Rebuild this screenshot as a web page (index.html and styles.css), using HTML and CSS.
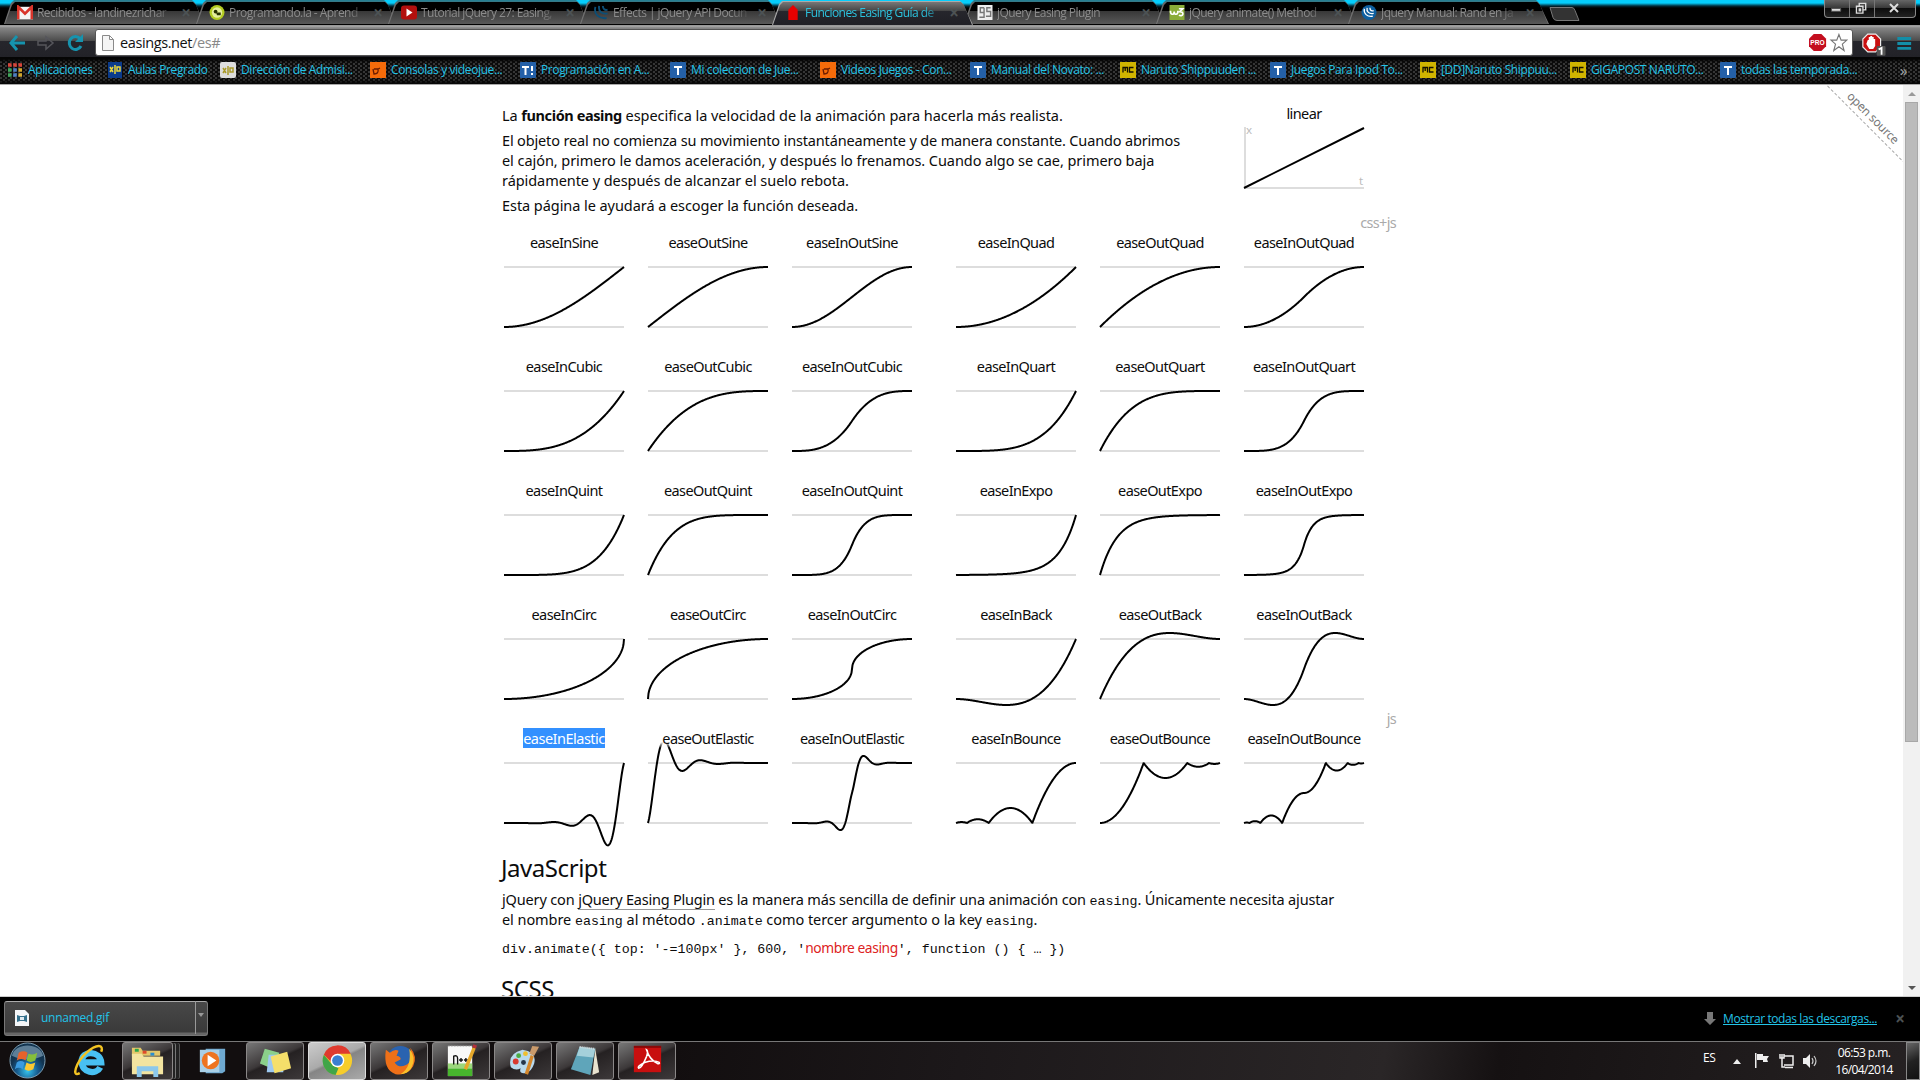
FILE: index.html
```html
<!DOCTYPE html>
<html lang="es">
<head>
<meta charset="utf-8">
<title>Funciones Easing Guía de</title>
<link rel="stylesheet" href="styles.css">
</head>
<body>
<header class="tabstrip">
  <div class="tab"><svg class="fav" viewBox="0 0 14 12"><path fill="#f4f4f4" d="M0 1h14v11H0z"/><path fill="none" stroke="#d9352b" stroke-width="2.4" d="M1 12V1l6 6 6-6v11"/></svg><span class="tab-text">Recibidos - landinezrichar</span><i class="x">×</i></div>
  <div class="tab"><svg class="fav" viewBox="0 0 16 16"><circle cx="8" cy="8" r="8" fill="#b4cc22"/><circle cx="8" cy="8" r="5.5" fill="#e5ef9c"/><circle cx="6.500" cy="7" r="2" fill="#263000"/><path fill="#263000" d="M7 8h5v3H8z"/></svg><span class="tab-text">Programando.la - Aprend</span><i class="x">×</i></div>
  <div class="tab"><svg class="fav" viewBox="0 0 16 14"><rect width="16" height="14" rx="3" fill="#b3100e"/><path fill="#fff" d="M5.500 3v8l6-4z"/></svg><span class="tab-text">Tutorial jQuery 27: Easing,</span><i class="x">×</i></div>
  <div class="tab"><svg class="fav" viewBox="0 0 16 16"><path fill="none" stroke="#0b4f78" stroke-width="2" d="M2 2c-2 8 4 13 12 12M6 1c-1 6 3 9 9 8M10 1c0 3 2 5 5 4"/></svg><span class="tab-text">Effects | jQuery API Docun</span><i class="x">×</i></div>
  <div class="tab active"><svg class="fav" viewBox="0 0 14 16"><path fill="#e80000" d="M2 16V5l5-5 5 5v11z"/></svg><span class="tab-text">Funciones Easing Guía de</span><i class="x">×</i></div>
  <div class="tab"><svg class="fav" viewBox="0 0 16 16"><path fill="#eee" d="M0 0h16v16H0z"/><path fill="none" stroke="#777" stroke-width="1.500" d="M7 3H3v5h4V3v10H2M14 3h-4v4h4v5H9"/></svg><span class="tab-text">jQuery Easing Plugin</span><i class="x">×</i></div>
  <div class="tab"><svg class="fav" viewBox="0 0 16 16"><path fill="#8aac38" d="M0 0h16v16H0z"/><path fill="none" stroke="#fff" stroke-width="1.800" d="M1 6c0 5 4 5 4 1 0 4 4 4 4-1M10 4h4l-3 3c5 0 4 6-1 4"/></svg><span class="tab-text">jQuery animate() Method</span><i class="x">×</i></div>
  <div class="tab"><svg class="fav" viewBox="0 0 16 16"><circle cx="8" cy="8" r="8" fill="#0d5fa0"/><path fill="none" stroke="#fff" stroke-width="1.400" d="M3 4c-1 5 3 9 9 8M6 3c-1 4 2 7 7 6M9 3c0 2 1 4 4 3"/></svg><span class="tab-text">Jquery Manual: Rand en Ja</span><i class="x">×</i></div>
  <svg class="newtab" viewBox="0 0 32 14"><path fill="#333" stroke="#777" d="M1 .500h22q2 0 3 3l4 10H8q-3 0-4-3z"/></svg>
  <div class="winctl">
    <svg viewBox="0 0 26 17"><path fill="#ddd" stroke="#555" d="M7 8.500h10v3H7z"/></svg>
    <svg viewBox="0 0 26 17"><path fill="none" stroke="#ddd" stroke-width="1.500" d="M7 6h7v7.500H7zM10 6V3h7v7h-3M10 9h1.500v2H10z"/></svg>
    <svg viewBox="0 0 40 17"><path fill="none" stroke="#ddd" stroke-width="2" d="M15 4l8 8M23 4l-8 8"/></svg>
  </div>
</header>
<nav class="toolbar">
  <svg class="nav" viewBox="0 0 95 32">
    <path fill="none" stroke="#1693ae" stroke-width="3" d="M25 18H11M17 11l-6 7 6 7"/>
    <path fill="none" stroke="#55555b" stroke-width="1.500" d="M38 16h8v-4l7 6-7 6v-4h-8z"/>
    <path fill="none" stroke="#1693ae" stroke-width="3" d="M80 13.500A6.200 6.500 0 1 0 81 21"/><path fill="#1693ae" d="M83 9v8h-8z"/>
  </svg>
  <div class="omnibox">
    <svg class="doc" viewBox="0 0 12 16"><path fill="#f5f5f5" stroke="#8a8a8a" d="M.500.500h7l4 4v11H.500zM7.500.500v4h4"/></svg>
    <span class="url">easings.net<em>/es#</em></span>
    <svg class="omni-icons" viewBox="0 0 40 20"><path fill="#c40f1f" d="M5 1h8l5 5v8l-5 5H5l-5-5V6z"/><text x="9" y="13" class="pro">PRO</text><path fill="#fff" stroke="#777" stroke-width="1.200" d="M31.500 1.500l2.300 6h6l-4.700 4.200 1.800 6.800-5.400-4-5.400 4 1.800-6.800L23.200 7.500h6z"/></svg>
  </div>
  <svg class="ext" viewBox="0 0 68 32"><path fill="#c91010" stroke="#eee" stroke-width="1.200" d="M15 9h8l5 5v8l-5 5h-8l-5-5v-8z"/><path fill="#fff" d="M15 15h1v-3h1.500v-1h2v1H21v2h1.500v7l-2 3h-4l-3-5z"/><rect x="24" y="21" width="9" height="10" rx="1" fill="#555"/><path fill="none" stroke="#fff" stroke-width="1.800" d="M26 24.500l3-1.500v7"/><path stroke="#138ea8" stroke-width="3" d="M45 13.500h14M45 18.500h14M45 23.500h14"/></svg>
</nav>
<nav class="bookmarks">
  <a class="bm apps"><svg viewBox="0 0 14 14"><path stroke="#d8453a" stroke-width="3.600" stroke-dasharray="3.600 1.600" d="M0 2h14"/><path stroke="#3fa65a" stroke-width="3.600" d="M0 7h3.600M0 12h3.600"/><path stroke="#4d7fc4" stroke-width="3.600" d="M5.200 7h3.600M5.200 12h3.600"/><path stroke="#d3a72c" stroke-width="3.600" d="M10.400 7H14M10.400 12H14"/></svg>Aplicaciones</a>
  <a class="bm aulas"><svg viewBox="0 0 14 16"><path fill="#0b3b8c" d="M0 0h14v16H0z"/><path fill="none" stroke="#ecd63a" stroke-width="1.500" d="M2 5l3 5M2 10l3-5M7 3v9M9 5h3v4H9z"/></svg>Aulas Pregrado</a>
  <a class="bm"><svg viewBox="0 0 16 16"><rect width="16" height="16" rx="2" fill="#ddd"/><path fill="none" stroke="#a99a2a" stroke-width="1.500" d="M3 6l3 5M3 11l3-5M8 4v9M10 6h3v4h-3z"/></svg>Dirección de Admisi...</a>
  <a class="bm"><svg viewBox="0 0 16 16"><path fill="#f56b0a" d="M0 0h16v16H0z"/><path fill="none" stroke="#6a1c00" stroke-width="1.300" d="M3 7l1 5q5 0 4-5M4 7h4l2-1"/></svg>Consolas y videojue...</a>
  <a class="bm"><svg viewBox="0 0 16 16"><rect width="16" height="16" rx="1" fill="#2460a8"/><path fill="none" stroke="#fff" stroke-width="2" d="M2 5h7M5.500 5v8M12 4v5M12 11v2"/></svg>Programación en A...</a>
  <a class="bm"><svg viewBox="0 0 16 16"><rect width="16" height="16" rx="1" fill="#2460a8"/><path fill="none" stroke="#fff" stroke-width="2" d="M4 5h8M8 5v8"/></svg>Mi coleccion de Jue...</a>
  <a class="bm"><svg viewBox="0 0 16 16"><path fill="#f56b0a" d="M0 0h16v16H0z"/><path fill="none" stroke="#6a1c00" stroke-width="1.300" d="M3 7l1 5q5 0 4-5M4 7h4l2-1"/></svg>Videos Juegos - Con...</a>
  <a class="bm"><svg viewBox="0 0 16 16"><rect width="16" height="16" rx="1" fill="#2460a8"/><path fill="none" stroke="#fff" stroke-width="2" d="M4 5h8M8 5v8"/></svg>Manual del Novato: ...</a>
  <a class="bm"><svg viewBox="0 0 16 16"><path fill="#d0b400" d="M0 0h16v16H0z"/><path fill="none" stroke="#141000" stroke-width="1.300" d="M3 10.500V5.500h4.500v5M5.200 6v3M13.500 5.500H9.500v4.500h4"/></svg>Naruto Shippuuden ...</a>
  <a class="bm"><svg viewBox="0 0 16 16"><rect width="16" height="16" rx="1" fill="#2460a8"/><path fill="none" stroke="#fff" stroke-width="2" d="M4 5h8M8 5v8"/></svg>Juegos Para Ipod To...</a>
  <a class="bm"><svg viewBox="0 0 16 16"><path fill="#d0b400" d="M0 0h16v16H0z"/><path fill="none" stroke="#141000" stroke-width="1.300" d="M3 10.500V5.500h4.500v5M5.200 6v3M13.500 5.500H9.500v4.500h4"/></svg>[DD]Naruto Shippuu...</a>
  <a class="bm"><svg viewBox="0 0 16 16"><path fill="#d0b400" d="M0 0h16v16H0z"/><path fill="none" stroke="#141000" stroke-width="1.300" d="M3 10.500V5.500h4.500v5M5.200 6v3M13.500 5.500H9.500v4.500h4"/></svg>GIGAPOST NARUTO...</a>
  <a class="bm"><svg viewBox="0 0 16 16"><rect width="16" height="16" rx="1" fill="#2460a8"/><path fill="none" stroke="#fff" stroke-width="2" d="M4 5h8M8 5v8"/></svg>todas las temporada...</a>
  <span class="more">»</span>
</nav>
<div class="viewport">
  <main class="page">
    <section class="intro">
      <div class="intro-text">
        <p class="lead">La <b>función easing</b> especifica la velocidad de la animación para hacerla más realista.</p>
        <p>El objeto real no comienza su movimiento instantáneamente y de manera constante. Cuando abrimos<br><span class="loose">el cajón, primero le damos aceleración, y después lo frenamos. Cuando algo se cae, primero baja</span><br><span class="loose">rápidamente y después de alcanzar el suelo rebota.</span></p>
        <p class="loose">Esta página le ayudará a escoger la función deseada.</p>
      </div>
      <figure class="linear">
        <figcaption>linear</figcaption>
        <svg class="plot" width="120" height="62" viewBox="0 0 120 62"><path class="axis" d="M1 0v61h119"/><path class="curve" d="M0 61L120 1"/><text x="2" y="7" class="axis-label">x</text><text x="115" y="58" class="axis-label">t</text></svg>
      </figure>
    </section>
    <div class="note css">css+js</div>
    <section class="grid">
      <figure data-easing="InSine"><figcaption>easeInSine</figcaption></figure>
      <figure data-easing="OutSine"><figcaption>easeOutSine</figcaption></figure>
      <figure data-easing="InOutSine"><figcaption>easeInOutSine</figcaption></figure>
      <figure data-easing="InQuad"><figcaption>easeInQuad</figcaption></figure>
      <figure data-easing="OutQuad"><figcaption>easeOutQuad</figcaption></figure>
      <figure data-easing="InOutQuad"><figcaption>easeInOutQuad</figcaption></figure>
      <figure data-easing="InCubic"><figcaption>easeInCubic</figcaption></figure>
      <figure data-easing="OutCubic"><figcaption>easeOutCubic</figcaption></figure>
      <figure data-easing="InOutCubic"><figcaption>easeInOutCubic</figcaption></figure>
      <figure data-easing="InQuart"><figcaption>easeInQuart</figcaption></figure>
      <figure data-easing="OutQuart"><figcaption>easeOutQuart</figcaption></figure>
      <figure data-easing="InOutQuart"><figcaption>easeInOutQuart</figcaption></figure>
      <figure data-easing="InQuint"><figcaption>easeInQuint</figcaption></figure>
      <figure data-easing="OutQuint"><figcaption>easeOutQuint</figcaption></figure>
      <figure data-easing="InOutQuint"><figcaption>easeInOutQuint</figcaption></figure>
      <figure data-easing="InExpo"><figcaption>easeInExpo</figcaption></figure>
      <figure data-easing="OutExpo"><figcaption>easeOutExpo</figcaption></figure>
      <figure data-easing="InOutExpo"><figcaption>easeInOutExpo</figcaption></figure>
      <figure data-easing="InCirc"><figcaption>easeInCirc</figcaption></figure>
      <figure data-easing="OutCirc"><figcaption>easeOutCirc</figcaption></figure>
      <figure data-easing="InOutCirc"><figcaption>easeInOutCirc</figcaption></figure>
      <figure data-easing="InBack"><figcaption>easeInBack</figcaption></figure>
      <figure data-easing="OutBack"><figcaption>easeOutBack</figcaption></figure>
      <figure data-easing="InOutBack"><figcaption>easeInOutBack</figcaption></figure>
      <figure data-easing="InElastic"><figcaption><span class="selected">easeInElastic</span></figcaption></figure>
      <figure data-easing="OutElastic"><figcaption>easeOutElastic</figcaption></figure>
      <figure data-easing="InOutElastic"><figcaption>easeInOutElastic</figcaption></figure>
      <figure data-easing="InBounce"><figcaption>easeInBounce</figcaption></figure>
      <figure data-easing="OutBounce"><figcaption>easeOutBounce</figcaption></figure>
      <figure data-easing="InOutBounce"><figcaption>easeInOutBounce</figcaption><div class="note js">js</div></figure>
    </section>
    <section class="docs">
      <h2>JavaScript</h2>
      <p>jQuery con <a>jQuery Easing Plugin</a> es la manera más sencilla de definir una animación con <code>easing</code>. Únicamente necesita ajustar<br><span class="loose">el nombre <code>easing</code> al método <code>.animate</code> como tercer argumento o la key <code>easing</code>.</span></p>
      <pre>div.animate({ top: '-=100px' }, 600, '<span class="arg">nombre easing</span>', function () { … })</pre>
      <h2 class="scss">SCSS</h2>
    </section>
    <div class="ribbon">open source</div>
  </main>
  <div class="scrollbar"><i class="up"></i><div class="thumb"></div><i class="down"></i></div>
</div>
<section class="downloads">
  <div class="item"><svg viewBox="0 0 14 16"><path fill="#f4f6f8" d="M0 0h10l4 4v12H0z"/><path fill="#35718d" d="M2 5l3 1h4l3-1v7l-3-1H5l-3 1z"/><path fill="#dfeaf0" d="M5 7h4v3H5z"/></svg><span class="fname">unnamed.gif</span><b class="drop"><i></i></b></div>
  <div class="show-all"><svg viewBox="0 0 12 14"><path fill="#777" d="M3 0h6v7h3l-6 6-6-6h3z"/></svg><a>Mostrar todas las descargas...</a><i class="x">×</i></div>
</section>
<footer class="taskbar">
  <div class="slot orb"><svg viewBox="0 0 38 38"><defs><radialGradient id="orb" cy=".8"><stop offset="0" stop-color="#35c4ee"/><stop offset=".6" stop-color="#175b8e"/><stop offset="1" stop-color="#123450"/></radialGradient></defs><circle cx="19" cy="19" r="18" fill="url(#orb)" stroke="#7fa0b5"/><path fill="#8fb0c6" opacity=".6" d="M3 14C6 0 32 0 35 14 26 19 12 19 3 14z"/><path fill="#e8622c" d="M10 11q5-3 9 0l-2 8q-4-3-9 0z"/><path fill="#86bf3a" d="M20 12q5 2 9-1l-2 8q-5 3-9 0z"/><path fill="#3a9be0" d="M8 21q4-3 8 0l-2 7q-4-3-8 0z"/><path fill="#fbc931" d="M18 21q4 3 9 0l-2 7q-5 3-9 0z"/></svg></div>
  <div class="slot ie"><svg viewBox="0 0 38 38"><path fill="none" stroke="#48c0f2" stroke-width="6.500" d="M30 26C26 34 11 32 11 20S30 9 31 21H13"/><path fill="none" stroke="#f3c321" stroke-width="2.500" d="M9 32C0 37 5 21 16 11S34 3 31 10"/></svg></div>
  <div class="slot btn stack"><svg viewBox="0 0 38 38"><path fill="#e3c76a" d="M3 6h9l2 3h18v5H3z"/><path fill="#2ba84a" d="M6 7h4v3H6z"/><path fill="#e04a2a" d="M14 9h4v3h-4z"/><path fill="#2a8fd0" d="M22 11h4v3h-4z"/><path fill="#f3e4a0" d="M3 12h10l2 3h20v18H3z"/><path fill="#8cc8ec" d="M8 36V25h22v11h-5v-6H13v6z"/></svg></div>
  <div class="slot wmp"><svg viewBox="0 0 38 38"><path fill="#6fa9d0" d="M12 7h20v23l-3 2H12z"/><path fill="#a9cfe6" d="M6 8h20v23H6z"/><circle cx="17" cy="19" r="9" fill="#ee7420"/><path fill="#fff" d="M14 13l9 6-9 6z"/></svg></div>
  <div class="slot btn"><svg viewBox="0 0 38 38"><path fill="#8bd08a" d="M8 7l15 4-6 17-14-6z"/><path fill="#9cc8f0" d="M12 13h15v18H10z"/><path fill="#f5df6a" d="M14 15l17-5 4 17-17 5z"/></svg></div>
  <div class="slot btn current"><svg viewBox="0 0 38 38"><circle cx="19" cy="19" r="15" fill="#f7cd2b"/><path fill="#df3a2e" d="M5 13a15 15 0 0 1 27.500-1H19l-7 8z"/><path fill="#41a548" d="M5 13l9 11 6 3-3 7A15 15 0 0 1 5 13z"/><circle cx="19" cy="19" r="7" fill="#fff"/><circle cx="19" cy="19" r="5.500" fill="#3b7fd0"/></svg></div>
  <div class="slot btn"><svg viewBox="0 0 38 38"><circle cx="20" cy="18" r="14" fill="#2a63b0"/><path fill="#ee7018" d="M5 8l4 3q5-4 9-2l-2 5q5 1 4 4l-6 3q4 6 11 3 9-4 5-18 8 9 3 19-6 10-18 8Q2 29 5 8z"/><path fill="#f9c02b" d="M29 7q8 9 2 20-4 6-11 6 12-7 9-26z"/></svg></div>
  <div class="slot btn"><svg viewBox="0 0 38 38"><path fill="#f8f8f8" d="M5 4h25v31H5z"/><path fill="#47b52d" d="M5 27h25v8H5z"/><path fill="#9bd77c" d="M5 22h25v5H5z"/><path stroke="#888" stroke-dasharray="2 1" d="M5 4h25"/><path fill="none" stroke="#111" stroke-width="1.400" d="M11 23V14.500q4-1.500 4 2.500v6M16.500 18.500h4M18.500 16.500v4M21.500 18.500h4M23.500 16.500v4"/><path stroke="#e6a82a" stroke-width="3.500" d="M32 6l-9 22"/><path stroke="#b3303a" stroke-width="4" d="M33 3l-1 3"/></svg></div>
  <div class="slot btn"><svg viewBox="0 0 38 38"><path fill="#b9d9ec" d="M18 8q15 2 12 14-3 9-9 10-7 1-5-5-5 3-10-1Q2 12 18 8z"/><circle cx="11" cy="20" r="3" fill="#d8392f"/><circle cx="14" cy="14" r="2.500" fill="#4bab43"/><circle cx="21" cy="12" r="2.500" fill="#f0bf2e"/><circle cx="19" cy="21" r="2.500" fill="#26364a"/><path stroke="#d4872c" stroke-width="3.500" d="M28 14l-6 19"/><path fill="#c99a6b" d="M25 12l3-8 7 1-5 9z"/></svg></div>
  <div class="slot btn"><svg viewBox="0 0 38 38"><path fill="#e9e3cf" d="M29 7l4 24-7 3z"/><path fill="#5fa5ba" d="M13 5l16 2-5 27-20-6z"/><path fill="#a5d0da" d="M13 5l16 2-2 9-17-2z"/><path stroke="#ddd" stroke-width="2" stroke-dasharray="1 1" d="M13 5l16 2"/></svg></div>
  <div class="slot btn"><svg viewBox="0 0 38 38"><path fill="#c80f0f" d="M5 4h28v27H5z"/><path fill="#8a0808" d="M5 4h28v2H5z"/><path fill="none" stroke="#fff" stroke-width="1.600" d="M18 8q3 10 11 14 3 1 2-1-5-3-15 0-8 4-6 6 3 0 8-12 2-6 0-7z"/></svg></div>
  <div class="tray">
    <span class="lang">ES</span>
    <svg viewBox="0 0 100 20"><path fill="#eee" d="M4 13l4-5 4 5zM26 2h1.500v15H26zM28 3h6v2h6l-2 3 1 3h-5V9h-6z"/><path fill="none" stroke="#eee" stroke-width="1.500" d="M55 5h9v9H55M56 16.500h8M53 3v5M53 8v8h3M51 3v4h4V3"/><path fill="#eee" d="M74 7h3l4-4v14l-4-4h-3z"/><path fill="none" stroke="#ccc" stroke-width="1.200" d="M83 7q2 3 0 6M85 5q4 5 0 10"/></svg>
    <div class="clock">06:53 p.m.<br>16/04/2014</div>
    <div class="peek"></div>
  </div>
</footer>
<script src="script.js"></script>
</body>
</html>
```
FILE: styles.css
```css
* { box-sizing: border-box; }
body { margin: 0; width: 1920px; height: 1080px; overflow: hidden; background: #000; display: flex; flex-direction: column; font-family: "Open Sans", sans-serif; font-size: 12px; white-space: nowrap; }
svg { display: block; flex: none; }
p, h2, pre, figure { margin: 0; }
i { font-style: normal; }

/* tabs */
.tabstrip { height: 25px; flex: none; display: flex; position: relative; padding-left: 4px; background: linear-gradient(#05cdfc 0 3px, #012a38 6px, #000 8px); }
.tab { position: relative; width: 192px; height: 25px; display: flex; align-items: center; padding: 0 0 0 13px; color: #8b8b8b; isolation: isolate; }
.tab::before, .tab::after { content: ""; position: absolute; z-index: -1; left: 0; top: 0; width: 201px; height: 24px; clip-path: polygon(0 100%, 7px 3px, 10px 0, 188px 0, 191px 3px, 100% 100%); background: linear-gradient(#267f92 0 1px, #666 3px, #777); }
.tab::after { left: 1px; width: 199px; top: 2px; height: 22px; background: linear-gradient(#000 0 9px, #383838 9px, #585858); }
.tab.active { color: #2cc3df; z-index: 1; }
.tab.active::before { background: #aaa; top: 1px; }
.tab.active::after { background: linear-gradient(#777, #444 9px, #26262c 9px, #202026); height: 23px; }
.fav { width: 16px; height: 15px; margin-right: 4px; }
.tab-text { width: 139px; overflow: hidden; letter-spacing: -.55px; -webkit-mask-image: linear-gradient(90deg, #000 118px, transparent 138px); mask-image: linear-gradient(90deg, #000 118px, transparent 138px); }
.x { font-size: 17px; font-weight: 700; color: #4c5254; width: 20px; text-align: center; line-height: 16px; }
.newtab { width: 32px; height: 14px; margin: 7px 0 0 9px; }
.winctl { margin-left: auto; margin-right: 4px; width: 92px; height: 18px; display: flex; border: 1px solid #888; border-top: 0; border-radius: 0 0 4px 4px; background: linear-gradient(#666, #383838 8px, #0c0c0c 8px, #222); }
.winctl svg { height: 17px; width: 25px; border-right: 1px solid #777; }
.winctl svg:last-child { width: 40px; border: 0; }

/* toolbar */
.toolbar { height: 32px; flex: none; display: flex; background: linear-gradient(#888 0, #aaa 1px, #858585 3px, #4a4a4a 16px, #26262c 16px, #222228); }
.nav { width: 95px; height: 32px; }
.omnibox { width: 1758px; height: 27px; margin-top: 4px; background: #fff; border: 1px solid #555; border-radius: 3px; display: flex; align-items: center; padding: 0 4px 0 6px; }
.doc { width: 12px; height: 16px; margin-right: 6px; }
.url { font-size: 14.500px; letter-spacing: -.4px; color: #111; }
.url em { font-style: normal; color: #888; }
.omni-icons { width: 40px; height: 19px; margin-left: auto; }
.pro { font: 700 7px "Liberation Sans", sans-serif; fill: #fff; text-anchor: middle; }
.ext { width: 67px; height: 32px; }

/* bookmarks */
.bookmarks { height: 28px; flex: none; display: flex; align-items: center; padding: 0 0 1px 8px; color: #22c4e8; border-bottom: 1px solid #aaa; background: linear-gradient(#050505 2px, transparent 6px 22px, #050505), repeating-conic-gradient(#0c0c0c 0 25%, #363636 0 50%) 0 0 / 5px 4px; }
.bm { width: 150px; flex: none; display: flex; align-items: center; letter-spacing: -.38px; line-height: 16px; }
.bm svg { width: 16px; height: 16px; margin-right: 5px; }
.bm.apps { width: 100px; }
.bm.apps svg, .bm.aulas svg { width: 14px; margin-right: 6px; }
.bm.aulas { width: 112px; }
.more { color: #aaa; margin-left: 30px; font-size: 15px; }

/* page */
.viewport { height: 912px; flex: none; display: flex; background: #fff; border-bottom: 1px solid #ccc; }
.page { width: 1903px; height: 911px; overflow: hidden; position: relative; padding-left: 502px; font: 14.500px/20px "Noto Sans", sans-serif; color: #0c0c0c; }
.intro { display: flex; height: 121px; padding-top: 20px; }
.intro-text { width: 742px; letter-spacing: -.155px; }
.intro-text p { margin-bottom: 5px; }
.intro-text .lead { letter-spacing: -.05px; }
.lead b { letter-spacing: -.4px; }
.loose, .intro-text .loose { letter-spacing: -.06px; }
figcaption { height: 20px; text-align: center; letter-spacing: -.6px; }
.linear { width: 120px; margin-top: -2px; }
.plot { margin-top: 4px; overflow: visible; }
.axis { fill: none; stroke: #ddd; stroke-width: 2; }
.curve { fill: none; stroke: #000; stroke-width: 2; }
.axis-label { font: 11.500px "Noto Sans", sans-serif; fill: #bbb; }
.note { color: #aaa; width: 894px; text-align: right; height: 20px; letter-spacing: -.7px; }
.note.css { margin-top: 6px; }
.grid { margin-left: 2px; display: grid; grid-template-columns: 120px 120px 140px 120px 120px 120px; column-gap: 24px; grid-auto-rows: 124px; width: 860px; }
.grid figure { width: 120px; position: relative; }
.grid figcaption { margin: 0 -10px; position: relative; z-index: 1; }
.grid svg { margin-top: 14px; overflow: visible; }
.note.js { position: absolute; width: 40px; right: -32px; top: -20px; }
.selected { background: #3390ff; color: #fff; letter-spacing: -.5px; }
[data-easing="OutElastic"] figcaption { background: linear-gradient(#fff 14px, rgba(255,255,255,0)); }
.docs { letter-spacing: -.155px; }
h2 { font-weight: 400; font-size: 24px; line-height: 32px; letter-spacing: -.45px; height: 37px; margin-left: -1px; }
.docs a { box-shadow: 0 1px #999; letter-spacing: -.22px; }
code, pre { font-family: "Liberation Mono", monospace; font-size: 13.300px; letter-spacing: 0; }
code { line-height: 1; }
pre { margin-top: 11px; height: 20px; line-height: 20px; }
.arg { color: #d22; font: 13.800px/1 "Noto Sans", sans-serif; letter-spacing: -.4px; }
h2.scss { margin-top: 13px; }
.ribbon { position: absolute; left: 1808px; top: 23px; width: 130px; height: 20px; color: #777; text-align: center; font-size: 12px; letter-spacing: -.2px; border-bottom: 1px dashed #aaa; transform: rotate(45deg); }

/* scrollbar */
.scrollbar { width: 17px; background: #f1f1f1; display: flex; flex-direction: column; align-items: center; }
.thumb { width: 13px; height: 640px; background: #bbb; border: 1px solid #a8a8a8; }
.up, .down { width: 0; height: 0; border: 4px solid transparent; }
.up { border-bottom-color: #999; border-top: 0; margin: 7px 0 6px; }
.down { border-top-color: #555; border-bottom: 0; margin: auto 0 6px; }

/* downloads */
.downloads { height: 44px; flex: none; background: #000; color: #22c4e8; display: flex; justify-content: space-between; padding: 4px 12px 0 4px; }
.item { width: 204px; height: 35px; border: 1px solid #777; border-top-color: #aaa; border-radius: 3px; background: linear-gradient(#484848, #3a3a3a 30px, #666 31px); display: flex; align-items: center; padding: 0 0 2px 10px; }
.item svg { width: 14px; height: 16px; margin-right: 12px; }
.drop { margin-left: auto; width: 12px; height: 33px; border-left: 1px solid #999; padding: 12px 2px; }
.drop i { display: block; width: 0; border: 3px solid transparent; border-top: 4px solid #999; border-bottom: 0; }
.fname { letter-spacing: -.25px; }
.show-all { display: flex; align-items: center; height: 35px; }
.show-all svg { width: 12px; height: 14px; margin-right: 7px; }
.show-all a { text-decoration: underline; letter-spacing: -.4px; width: 153px; margin-right: 16px; }
.show-all .x { width: 16px; }

/* taskbar */
.taskbar { height: 39px; flex: none; display: flex; gap: 4px; border-top: 1px solid #777; background: linear-gradient(100deg, #120e0f 0 35%, #1c181a 50%, #2a2627 72%, #151112 78%, #262223 100%); }
.slot { width: 58px; height: 38px; display: flex; justify-content: center; align-items: center; }
.slot svg { width: 37px; height: 37px; margin-top: -2px; }
.orb { margin-right: 4px; width: 54px; }
.ie { width: 54px; }
.stack { margin-left: 2px; box-shadow: 3px 0 0 -1px #222, 4px 0 0 -1px #777, 7px 0 0 -1px #222, 8px 0 0 -1px #555; }
.stack.slot { width: 51px; }
.wmp { width: 65px; padding-left: 5px; }
.btn { border: 1px solid #8b8888; border-radius: 3px; background: linear-gradient(155deg, #777 0, #3c3839 45%, #252122 50%, #3d393a); }
.current { background: linear-gradient(155deg, #ccc, #aaa 45%, #858585 50%, #aaa); border-color: #ddd; }
.tray { margin-left: auto; display: flex; color: #fff; }
.lang { margin-top: 7px; width: 26px; letter-spacing: -.5px; }
.tray svg { width: 100px; height: 20px; margin-top: 9px; }
.clock { width: 76px; margin-left: -3px; text-align: center; line-height: 17px; padding-top: 2px; letter-spacing: -.6px; }
.peek { width: 14px; height: 38px; margin-left: 4px; border: 1px solid #888; background: linear-gradient(155deg, #666, #222 50%, #111); }
```
FILE: script.js
```js
// Base "in" functions; Out and InOut variants are derived from them.
const overshoot = 1.70158;
const elastic = (t, p) => t === 0 || t === 1 ? t : -Math.pow(2, 10 * (t - 1)) * Math.sin((t - 1 - p / 4) * 2 * Math.PI / p);
const back = (t, s) => t * t * ((s + 1) * t - s);
function bounceOut(t) {
  if (t < 1 / 2.75) return 7.5625 * t * t;
  if (t < 2 / 2.75) return 7.5625 * (t -= 1.5 / 2.75) * t + 0.75;
  if (t < 2.5 / 2.75) return 7.5625 * (t -= 2.25 / 2.75) * t + 0.9375;
  return 7.5625 * (t -= 2.625 / 2.75) * t + 0.984375;
}
const base = {
  Sine: t => 1 - Math.cos(t * Math.PI / 2),
  Quad: t => t ** 2,
  Cubic: t => t ** 3,
  Quart: t => t ** 4,
  Quint: t => t ** 5,
  Expo: t => t === 0 ? 0 : 2 ** (10 * (t - 1)),
  Circ: t => 1 - Math.sqrt(1 - t * t),
  Back: (t, half) => back(t, half ? overshoot * 1.525 : overshoot),
  Elastic: (t, half) => elastic(t, half ? 0.45 : 0.3),
  Bounce: t => 1 - bounceOut(1 - t)
};
function ease(mode, f, t) {
  if (mode === 'In') return f(t);
  if (mode === 'Out') return 1 - f(1 - t);
  return t < 0.5 ? f(2 * t, true) / 2 : 1 - f(2 - 2 * t, true) / 2;
}
document.querySelectorAll('[data-easing]').forEach(figure => {
  const [, mode, name] = figure.dataset.easing.match(/^(InOut|In|Out)(.+)$/);
  const points = [];
  for (let i = 0; i <= 240; i++) {
    points.push((i / 2) + ',' + (61 - 60 * ease(mode, base[name], i / 240)).toFixed(2));
  }
  figure.querySelector('figcaption').insertAdjacentHTML('afterend',
    '<svg width="120" height="62" viewBox="0 0 120 62"><path class="axis" d="M0 1h120M0 61h120"/>' +
    '<polyline class="curve" points="' + points.join(' ') + '"/></svg>');
});
```
